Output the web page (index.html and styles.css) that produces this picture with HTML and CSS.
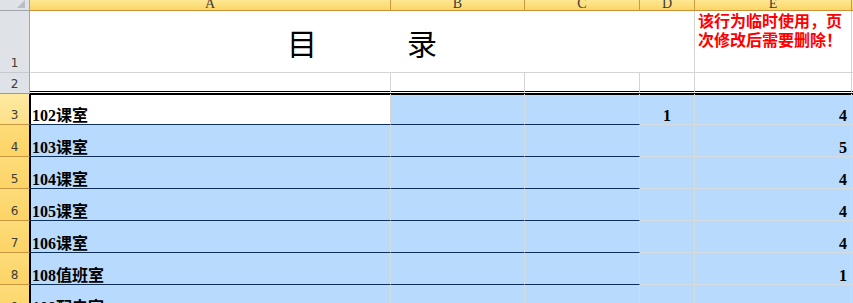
FILE: index.html
```html
<!DOCTYPE html>
<html lang="zh-CN">
<head>
<meta charset="utf-8">
<title>目录</title>
<link rel="stylesheet" href="styles.css">
</head>
<body>
<div class="sheet">
  <!-- column headers -->
  <div class="corner"><span class="tri"></span></div>
  <div class="colhead"><span>A</span></div>
  <div class="colhead"><span>B</span></div>
  <div class="colhead"><span>C</span></div>
  <div class="colhead"><span>D</span></div>
  <div class="colhead"><span>E</span></div>
  <div class="colhead last"></div>

  <!-- row 1 -->
  <div class="rowhead"><span>1</span></div>
  <div class="cell title">目　　　录</div>
  <div class="cell note">该行为临时使用，页<br>次修改后需要删除！</div>
  <div class="cell"></div>

  <!-- row 2 -->
  <div class="rowhead r2"><span>2</span></div>
  <div class="cell sep"></div>
  <div class="cell sep"></div>
  <div class="cell sep"></div>
  <div class="cell sep"></div>
  <div class="cell sep"></div>
  <div class="cell sep"></div>

  <!-- row 3 -->
  <div class="rowhead sel active"><span>3</span></div>
  <div class="cell name cur">102课室</div>
  <div class="cell blue line top"></div>
  <div class="cell blue line top"></div>
  <div class="cell blue num center top">1</div>
  <div class="cell blue num right top">4</div>
  <div class="cell blue top"></div>

  <!-- row 4 -->
  <div class="rowhead sel"><span>4</span></div>
  <div class="cell blue name line edge">103课室</div>
  <div class="cell blue line"></div>
  <div class="cell blue line"></div>
  <div class="cell blue num center"></div>
  <div class="cell blue num right">5</div>
  <div class="cell blue"></div>

  <!-- row 5 -->
  <div class="rowhead sel"><span>5</span></div>
  <div class="cell blue name line edge">104课室</div>
  <div class="cell blue line"></div>
  <div class="cell blue line"></div>
  <div class="cell blue num center"></div>
  <div class="cell blue num right">4</div>
  <div class="cell blue"></div>

  <!-- row 6 -->
  <div class="rowhead sel"><span>6</span></div>
  <div class="cell blue name line edge">105课室</div>
  <div class="cell blue line"></div>
  <div class="cell blue line"></div>
  <div class="cell blue num center"></div>
  <div class="cell blue num right">4</div>
  <div class="cell blue"></div>

  <!-- row 7 -->
  <div class="rowhead sel"><span>7</span></div>
  <div class="cell blue name line edge">106课室</div>
  <div class="cell blue line"></div>
  <div class="cell blue line"></div>
  <div class="cell blue num center"></div>
  <div class="cell blue num right">4</div>
  <div class="cell blue"></div>

  <!-- row 8 -->
  <div class="rowhead sel"><span>8</span></div>
  <div class="cell blue name line edge">108值班室</div>
  <div class="cell blue line"></div>
  <div class="cell blue line"></div>
  <div class="cell blue num center"></div>
  <div class="cell blue num right">1</div>
  <div class="cell blue"></div>

  <!-- row 9 -->
  <div class="rowhead sel"><span>9</span></div>
  <div class="cell blue name line edge">109配电室</div>
  <div class="cell blue line"></div>
  <div class="cell blue line"></div>
  <div class="cell blue num center"></div>
  <div class="cell blue num right"></div>
  <div class="cell blue"></div>
</div>
</body>
</html>
```

FILE: styles.css
```css
html, body {
  margin: 0;
  padding: 0;
  background: #ffffff;
  overflow: hidden;
}

body {
  width: 853px;
  height: 303px;
}

.sheet {
  display: grid;
  grid-template-columns: 30px 361px 134px 115px 55px 157px 1fr;
  grid-template-rows: 11px 62px 21px 31px repeat(6, 32px);
  width: 900px;
}

.sheet > div {
  box-sizing: border-box;
  overflow: hidden;
}

/* header strip */
.corner {
  background: #dfe3e8;
  border-right: 1px solid #9ea5ae;
  border-bottom: 1px solid #9ea5ae;
  position: relative;
}

.corner .tri {
  position: absolute;
  right: 4px;
  bottom: 2px;
  width: 0;
  height: 0;
  border-left: 8px solid transparent;
  border-bottom: 8px solid #b9bec4;
}

.colhead {
  background: linear-gradient(#fde792, #fcd666);
  border-right: 1px solid #c99a45;
  border-bottom: 1px solid #c8913a;
  display: flex;
  justify-content: center;
  align-items: flex-end;
  font-family: "Liberation Serif", serif;
  font-size: 14px;
  color: #3a3a3a;
}

.colhead span {
  line-height: 14px;
  margin-bottom: -1px;
}

.colhead.last {
  border-right: none;
}

/* row headers */
.rowhead {
  grid-column: 1;
  background: #dfe3e8;
  border-right: 1px solid #9ea5ae;
  border-bottom: 1px solid #c5cad0;
  display: flex;
  justify-content: center;
  align-items: flex-end;
  font-family: "DejaVu Sans", sans-serif;
  font-size: 12px;
  color: #3c3c3c;
}

.rowhead span {
  line-height: 12px;
  margin-bottom: 3px;
}

.rowhead.r2 {
  border-bottom-color: #c8963e;
}

.rowhead.sel {
  background: linear-gradient(#fddc78, #fcd466);
  border-bottom: 1px solid #c8963e;
  border-right: 1px solid #000000;
}

.rowhead.sel.active {
  background: linear-gradient(#fde9a0, #fde18a);
}

/* cells */
.cell {
  border-right: 1px solid #d4d4d4;
  border-bottom: 1px solid #d4d4d4;
  font-family: "Liberation Serif", "Noto Sans CJK SC", serif;
}

.title {
  grid-column: 2 / 6;
  display: flex;
  justify-content: center;
  align-items: center;
  font-family: "Noto Sans CJK SC", sans-serif;
  font-size: 30px;
  line-height: 30px;
  color: #000000;
  padding-top: 1px;
}

.note {
  color: #ff0000;
  font-family: "Noto Sans CJK SC", sans-serif;
  font-weight: bold;
  font-size: 16px;
  line-height: 19px;
  padding-left: 3px;
}

.sep {
  border-bottom: 3px double #000000;
}

.blue {
  background: #b8dafd;
  border-right-color: #d6dbe0;
  border-bottom-color: #d6dbe0;
}

/* heavy selection edge just under the double rule */
.top {
  box-shadow: inset 0 1px 0 #000000;
}

.line {
  border-bottom-color: #0f2f5b;
}

.name {
  display: flex;
  align-items: flex-end;
  padding-left: 2px;
  font-weight: bold;
  font-size: 16px;
  line-height: 16px;
  color: #000000;
  white-space: nowrap;
}

.cur {
  background: #ffffff;
  border-bottom-color: #0f2f5b;
  box-shadow: inset 1px 1px 0 #000000;
  border-right-color: #d4d4d4;
}

.edge {
  box-shadow: inset 1px 0 0 #000000;
}

.num {
  display: flex;
  align-items: flex-end;
  font-weight: bold;
  font-size: 16px;
  line-height: 16px;
  color: #000000;
}

.center {
  justify-content: center;
}

.right {
  justify-content: flex-end;
  padding-right: 4px;
}
```
